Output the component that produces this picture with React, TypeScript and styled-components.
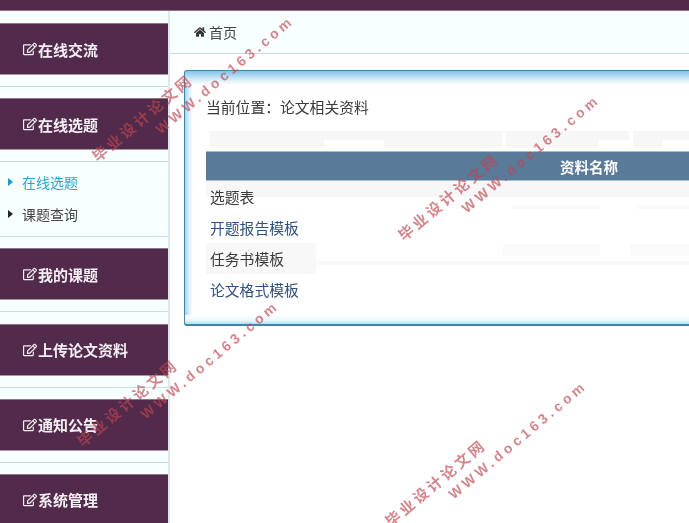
import React from 'react';
import styled, { createGlobalStyle } from 'styled-components';
import { FaRegEdit, FaHome } from 'react-icons/fa';

const Global = createGlobalStyle`
  html, body { margin: 0; padding: 0; background: #fff; }
  body { font-family: "Noto Sans CJK SC", "Liberation Sans", sans-serif; }
`;

const Page = styled.div`
  position: relative;
  width: 689px;
  height: 523px;
  overflow: hidden;
  background: #fff;
  filter: blur(0.35px);
`;
const TopBar = styled.div`
  height: 10px;
  background: #522a4b;
  border-bottom: 1px solid #8d7389;
`;
const Body = styled.div`
  display: flex;
  height: 512px;
`;
const Sidebar = styled.aside`
  flex: 0 0 168px;
  background: #f8ffff;
  border-right: 2px solid #dfe8ec;
  padding-top: 12px;
`;
const Group = styled.section`
  margin-bottom: 11.2px;
  border-bottom: 1px solid #c9dfe8;
  padding-bottom: 11px;
`;
const GroupHeader = styled.div`
  height: 52px;
  box-sizing: border-box;
  background: #522a4b;
  border-top: 1px solid #8d7389;
  border-bottom: 1px solid #a995a6;
  display: flex;
  align-items: center;
  padding-left: 23px;
  color: #f4eff4;
  font-size: 15px;
  font-weight: 700;
  gap: 1px;
`;
const SubMenu = styled.ul`
  list-style: none;
  margin: 11px 0 -11px;
  padding: 4px 0 6px;
  border-top: 1px solid #c9dfe8;
`;
const SubItem = styled.li<{ $active?: boolean }>`
  height: 32px;
  display: flex;
  align-items: center;
  padding-left: 8px;
  gap: 9px;
  font-size: 14px;
  color: ${p => (p.$active ? '#2ea3cc' : '#444')};
  &::before {
    content: '';
    border-left: 5px solid ${p => (p.$active ? '#1f9ac6' : '#222')};
    border-top: 4px solid transparent;
    border-bottom: 4px solid transparent;
  }
`;
const Main = styled.main`
  flex: 1;
  min-width: 0;
`;
const Breadcrumb = styled.div`
  height: 42px;
  background: #f8ffff;
  border-bottom: 1px solid #c5d9e5;
  display: flex;
  align-items: center;
  padding-left: 24px;
  gap: 3px;
  font-size: 14px;
  color: #444;
`;
const Panel = styled.div`
  margin: 16px 0 0 14px;
  width: 800px;
  height: 256px;
  box-sizing: border-box;
  border: 1px solid #3f86ad;
  border-bottom-width: 2px;
  border-radius: 3px;
  padding: 25px 0 0 21px;
  background:
    linear-gradient(#82c2e8, #d4ebf8 60%, #fff) top / 100% 14px no-repeat,
    linear-gradient(#fff, #e8f7fd 60%, #b5def4) bottom / 100% 9px no-repeat,
    linear-gradient(90deg, #a4d4f0, #d8f0fb 50%, #fff) left / 8px 100% no-repeat,
    #fff;
`;
const Location = styled.div`
  font-size: 14.8px;
  line-height: 22px;
  color: #3a3a3a;
  margin-bottom: 13px;
`;
const GhostStrip = styled.div`
  display: flex;
  gap: 4px;
  height: 17px;
  margin-left: 4px;
  margin-bottom: 3px;
`;
const GhostCell = styled.div<{ $w: number; $at: number; $gap: number }>`
  flex: 0 0 ${p => p.$w}px;
  background:
    linear-gradient(#fff, #fff) ${p => p.$at}px bottom / ${p => p.$gap}px 8px no-repeat,
    #f7f7f7;
`;
const Table = styled.div`
  width: 766px;
`;
const HeaderRow = styled.div`
  height: 30px;
  box-sizing: border-box;
  background: #5a7a9a;
  border-top: 1px solid #a8bccd;
  border-bottom: 1px solid #a8bccd;
  display: flex;
  align-items: center;
  justify-content: center;
  color: #fff;
  font-size: 14.5px;
  font-weight: 700;
`;
const Row = styled.div<{ $tone?: 'top' | 'mid' }>`
  height: 31px;
  padding-left: 4px;
  display: flex;
  align-items: center;
  font-size: 14.8px;
  color: #3a3a3a;
  background: ${p =>
    p.$tone === 'top'
      ? 'linear-gradient(#f7f7f7, #f7f7f7) left top / 100% 16px no-repeat, linear-gradient(#fafafa, #fafafa) 305px 24px / 89px 4px no-repeat, linear-gradient(#fafafa, #fafafa) 430px 24px / 200px 4px no-repeat'
      : p.$tone === 'mid'
      ? 'linear-gradient(#f8f8f8, #f8f8f8) left top / 110px 100% no-repeat, linear-gradient(#fafafa, #fafafa) 297px 1px / 97px 12px no-repeat, linear-gradient(#fafafa, #fafafa) 424px 1px / 300px 12px no-repeat, linear-gradient(transparent 18px, #f9f9f9 18px 22px, transparent 22px)'
      : 'none'};
`;
const DocLink = styled.a`
  color: #2f5082;
  text-decoration: none;
`;
const Mark = styled.div<{ $x: number; $y: number }>`
  position: absolute;
  left: ${p => p.$x}px;
  top: ${p => p.$y}px;
  transform-origin: 0 0;
  transform: rotate(-40deg);
  white-space: nowrap;
  color: rgba(190, 70, 80, 0.66);
  pointer-events: none;
`;
const MarkCn = styled.div`
  font-size: 15px;
  font-weight: 700;
  line-height: 16px;
  letter-spacing: 3px;
`;
const MarkEn = styled.div`
  font-family: "Liberation Sans", sans-serif;
  font-size: 14px;
  font-weight: 700;
  line-height: 16px;
  margin: 4px 0 0 66px;
  letter-spacing: 3.7px;
`;

const menus = ['在线交流', '在线选题', '我的课题', '上传论文资料', '通知公告', '系统管理'];
const ghost = [
  { w: 292, at: 114, gap: 60 },
  { w: 123, at: 93, gap: 30 },
  { w: 200, at: 30, gap: 170 },
];
const marks = [
  { x: 89, y: 152 },
  { x: 395, y: 231 },
  { x: 74, y: 437 },
  { x: 382, y: 517 },
];

export default function App() {
  return (
    <Page>
      <Global />
      <TopBar />
      <Body>
        <Sidebar>
          {menus.map(m => (
            <Group key={m}>
              <GroupHeader>
                <FaRegEdit size={14} />
                {m}
              </GroupHeader>
              {m === '在线选题' && (
                <SubMenu>
                  <SubItem $active>在线选题</SubItem>
                  <SubItem>课题查询</SubItem>
                </SubMenu>
              )}
            </Group>
          ))}
        </Sidebar>
        <Main>
          <Breadcrumb>
            <FaHome size={12} color="#333" />
            首页
          </Breadcrumb>
          <Panel>
            <Location>当前位置：论文相关资料</Location>
            <GhostStrip>
              {ghost.map((g, i) => (
                <GhostCell key={i} $w={g.w} $at={g.at} $gap={g.gap} />
              ))}
            </GhostStrip>
            <Table>
              <HeaderRow>资料名称</HeaderRow>
              <Row $tone="top">选题表</Row>
              <Row><DocLink href="#">开题报告模板</DocLink></Row>
              <Row $tone="mid">任务书模板</Row>
              <Row><DocLink href="#">论文格式模板</DocLink></Row>
            </Table>
          </Panel>
        </Main>
      </Body>
      {marks.map((m, i) => (
        <Mark key={i} $x={m.x} $y={m.y}>
          <MarkCn>毕业设计论文网</MarkCn>
          <MarkEn>WWW.doc163.com</MarkEn>
        </Mark>
      ))}
    </Page>
  );
}
